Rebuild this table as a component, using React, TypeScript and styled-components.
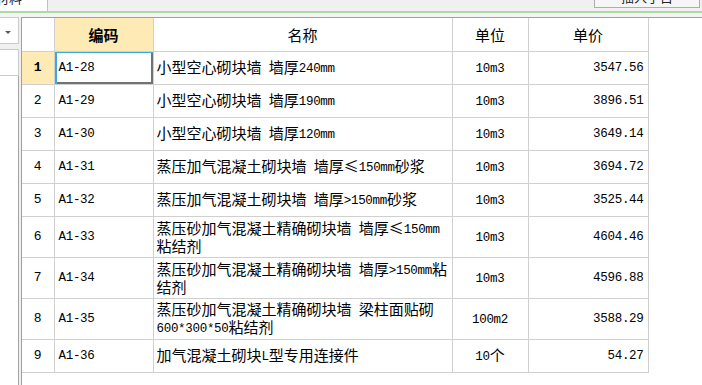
import styled, { createGlobalStyle } from "styled-components"

const GlobalStyle = createGlobalStyle`
  html, body {
    margin: 0;
    padding: 0;
    background: #ffffff;
  }
  body {
    font-family: "Noto Sans CJK SC", "Noto Sans", sans-serif;
    color: #000;
    overflow: hidden;
  }
`

type Row = {
  no: number
  code: string
  name: string[]
  unit: string
  price: string
}

const rows: Row[] = [
  { no: 1, code: "A1-28", name: ["小型空心砌块墙 墙厚240mm"], unit: "10m3", price: "3547.56" },
  { no: 2, code: "A1-29", name: ["小型空心砌块墙 墙厚190mm"], unit: "10m3", price: "3896.51" },
  { no: 3, code: "A1-30", name: ["小型空心砌块墙 墙厚120mm"], unit: "10m3", price: "3649.14" },
  { no: 4, code: "A1-31", name: ["蒸压加气混凝土砌块墙 墙厚≤150mm砂浆"], unit: "10m3", price: "3694.72" },
  { no: 5, code: "A1-32", name: ["蒸压加气混凝土砌块墙 墙厚>150mm砂浆"], unit: "10m3", price: "3525.44" },
  { no: 6, code: "A1-33", name: ["蒸压砂加气混凝土精确砌块墙 墙厚≤150mm", "粘结剂"], unit: "10m3", price: "4604.46" },
  { no: 7, code: "A1-34", name: ["蒸压砂加气混凝土精确砌块墙 墙厚>150mm粘", "结剂"], unit: "10m3", price: "4596.88" },
  { no: 8, code: "A1-35", name: ["蒸压砂加气混凝土精确砌块墙 梁柱面贴砌", "600*300*50粘结剂"], unit: "100m2", price: "3588.29" },
  { no: 9, code: "A1-36", name: ["加气混凝土砌块L型专用连接件"], unit: "10个", price: "54.27" },
]

const Latin = styled.span`
  font-family: "Liberation Mono", monospace;
  font-size: 12.5px;
  letter-spacing: -0.3px;
  vertical-align: 1px;
`

// ascii runs get the narrow mono font, the rest stays CJK
const Mixed = ({ text }: { text: string }) => (
  <>
    {text
      .split(/([\x20-\x7e]+)/)
      .filter(Boolean)
      .map((part, i) =>
        /^[\x20-\x7e]+$/.test(part) ? <Latin key={i}>{part}</Latin> : <span key={i}>{part}</span>
      )}
  </>
)

const App = () => {
  return (
    <Page>
      <GlobalStyle />
      <TopBar>
        <Tab>
          <TabText>定额材料</TabText>
        </Tab>
        <ToolButton>
          <ToolText>插入子目</ToolText>
        </ToolButton>
      </TopBar>
      <Strip />
      <Main>
        <LeftPanel>
          <Dropdown>
            <Arrow />
          </Dropdown>
          <InputBox />
          <ListBox />
        </LeftPanel>
        <TableArea>
          <Grid>
            <colgroup>
              <col style={{ width: 32 }} />
              <col style={{ width: 99 }} />
              <col style={{ width: 299 }} />
              <col style={{ width: 76 }} />
              <col style={{ width: 120 }} />
            </colgroup>
            <thead>
              <tr>
                <HeadCell />
                <HeadCell $accent>编码</HeadCell>
                <HeadCell>名称</HeadCell>
                <HeadCell>单位</HeadCell>
                <HeadCell>单价</HeadCell>
              </tr>
            </thead>
            <tbody>
              {rows.map((row) => (
                <BodyRow key={row.no} $tall={row.name.length > 1}>
                  <NoCell $active={row.no === 1}>{row.no}</NoCell>
                  <CodeCell $selected={row.no === 1}>{row.code}</CodeCell>
                  <NameCell>
                    {row.name.map((line, i) => (
                      <NameLine key={i}>
                        <Mixed text={line} />
                      </NameLine>
                    ))}
                  </NameCell>
                  <UnitCell>
                    <Mixed text={row.unit} />
                  </UnitCell>
                  <PriceCell>{row.price}</PriceCell>
                </BodyRow>
              ))}
            </tbody>
          </Grid>
        </TableArea>
      </Main>
    </Page>
  )
}

export default App

const Page = styled.div`
  width: 702px;
  height: 385px;
  display: flex;
  flex-direction: column;
  background: #f0f0f0;
  overflow: hidden;
`
const TopBar = styled.div`
  height: 11px;
  display: flex;
  justify-content: space-between;
  align-items: flex-start;
  background: #f0f0f0;
  border-bottom: 2px solid #acd9a4;
  flex-shrink: 0;
`
const Tab = styled.div`
  width: 47px;
  height: 11px;
  background: #ffffff;
  border-right: 1px solid #a6d69c;
  overflow: hidden;
`
const TabText = styled.div`
  font-size: 13px;
  line-height: 13px;
  color: #222;
  white-space: nowrap;
  margin-top: -9px;
  margin-left: -30px;
`
const ToolButton = styled.div`
  width: 104px;
  height: 7px;
  margin-right: 2px;
  border: 1px solid #adadad;
  border-top: none;
  background: #f6f6f6;
  overflow: hidden;
`
const ToolText = styled.div`
  font-size: 13px;
  line-height: 13px;
  margin-top: -10px;
  text-align: center;
  color: #222;
  white-space: nowrap;
`
const Strip = styled.div`
  height: 4px;
  background: #f4f4f4;
  flex-shrink: 0;
`
const Main = styled.div`
  flex: 1;
  display: flex;
  gap: 2px;
  min-height: 0;
`
const LeftPanel = styled.div`
  width: 19px;
  display: flex;
  flex-direction: column;
`
const Dropdown = styled.div`
  height: 27px;
  background: #ffffff;
  border: 1px solid #cbcbcb;
  border-left: none;
  box-sizing: border-box;
  display: flex;
  justify-content: center;
  align-items: flex-end;
  padding-bottom: 9px;
  margin-bottom: 5px;
`
const Arrow = styled.div`
  width: 0;
  height: 0;
  border-left: 3px solid transparent;
  border-right: 3px solid transparent;
  border-top: 3px solid #5a5a5a;
  margin-left: -2px;
`
const InputBox = styled.div`
  height: 27px;
  background: #ffffff;
  border: 1px solid #cbcbcb;
  border-left: none;
  box-sizing: border-box;
`
const ListBox = styled.div`
  flex: 1;
  background: #ffffff;
  border-right: 1px solid #a3a3a3;
`
const TableArea = styled.div`
  flex: 1;
  background: #ffffff;
  border-top: 1px solid #a0a0a0;
  border-left: 1px solid #a0a0a0;
  overflow: hidden;
`
const Grid = styled.table`
  border-collapse: collapse;
  table-layout: fixed;
  width: 626px;
`
const cellBase = `
  border: 1px solid #d0d0d0;
  padding: 0;
  box-sizing: border-box;
  font-size: 15px;
  white-space: nowrap;
  overflow: hidden;
  &:first-child {
    border-left: none;
  }
`
const HeadCell = styled.th<{ $accent?: boolean }>`
  ${cellBase}
  border-top: none;
  height: 33px;
  font-weight: ${(p) => (p.$accent ? 700 : 400)};
  background: ${(p) => (p.$accent ? "#fdeab5" : "#ffffff")};
  text-align: center;
`
const BodyRow = styled.tr<{ $tall?: boolean }>`
  height: ${(p) => (p.$tall ? "41px" : "33px")};
`
const NoCell = styled.td<{ $active?: boolean }>`
  ${cellBase}
  text-align: center;
  font-family: "Liberation Mono", monospace;
  font-size: 13px;
  font-weight: ${(p) => (p.$active ? 700 : 400)};
  background: ${(p) => (p.$active ? "#fdeab5" : "#ffffff")};
`
const CodeCell = styled.td<{ $selected?: boolean }>`
  ${cellBase}
  padding-left: 4px;
  font-family: "Liberation Mono", monospace;
  font-size: 12.5px;
  letter-spacing: -0.3px;
  box-shadow: ${(p) =>
    p.$selected ? "inset 2px 1px 0 #3fa7de, inset -2px -2px 0 #727272" : "none"};
`
const NameCell = styled.td`
  ${cellBase}
  padding-left: 3px;
  line-height: 15px;
`
const NameLine = styled.div`
  white-space: nowrap;
`
const UnitCell = styled.td`
  ${cellBase}
  text-align: center;
  line-height: 15px;
`
const PriceCell = styled.td`
  ${cellBase}
  text-align: right;
  padding-right: 4px;
  font-family: "Liberation Mono", monospace;
  font-size: 12.5px;
  letter-spacing: -0.3px;
`
